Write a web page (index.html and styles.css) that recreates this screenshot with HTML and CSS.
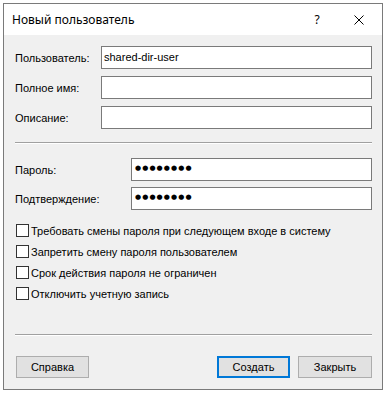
FILE: index.html
```html
<!DOCTYPE html>
<html lang="ru">
<head>
<meta charset="utf-8">
<title>Новый пользователь</title>
<link rel="stylesheet" href="styles.css">
</head>
<body>
<div class="window">
  <div class="titlebar">
    <span class="title">Новый пользователь</span>
    <span class="help">?</span>
    <span class="close">
      <svg width="10" height="10" viewBox="0 0 10 10"><path d="M0.5 0.5L9.5 9.5M9.5 0.5L0.5 9.5" stroke="#000" stroke-width="1" fill="none"/></svg>
    </span>
  </div>
  <div class="content">
    <div class="fields fields-user">
      <div class="row"><span class="label">Пользователь:</span><div class="input">shared-dir-user</div></div>
      <div class="row"><span class="label">Полное имя:</span><div class="input"></div></div>
      <div class="row"><span class="label">Описание:</span><div class="input"></div></div>
    </div>
    <div class="sep sep1"></div>
    <div class="fields fields-pass">
      <div class="row"><span class="label">Пароль:</span><div class="input pass">●●●●●●●●</div></div>
      <div class="row"><span class="label">Подтверждение:</span><div class="input pass">●●●●●●●●</div></div>
    </div>
    <div class="checks">
      <div class="check"><span class="box"></span><span>Требовать смены пароля при следующем входе в систему</span></div>
      <div class="check"><span class="box"></span><span>Запретить смену пароля пользователем</span></div>
      <div class="check"><span class="box"></span><span>Срок действия пароля не ограничен</span></div>
      <div class="check"><span class="box"></span><span>Отключить учетную запись</span></div>
    </div>
    <div class="sep sep2"></div>
    <div class="buttons">
      <button class="btn">Справка</button>
      <span class="spacer"></span>
      <button class="btn default">Создать</button>
      <button class="btn">Закрыть</button>
    </div>
  </div>
</div>
</body>
</html>
```
FILE: styles.css
```css
html, body {
  margin: 0;
  padding: 0;
  background: #ffffff;
}
body {
  font-family: "Liberation Sans", Arial, sans-serif;
  font-size: 11px;
  color: #000;
}
.window {
  margin: 3px 0 0 3px;
  width: 380px;
  height: 387px;
  box-sizing: border-box;
  border: 1px solid #7a7a7a;
  display: flex;
  flex-direction: column;
  background: #f0f0f0;
}
.titlebar {
  height: 31px;
  flex: none;
  background: #fff;
  display: flex;
  align-items: center;
  font-family: "Segoe UI", "Noto Sans", sans-serif;
  font-size: 12px;
}
.title {
  margin-left: 8px;
  flex: 1;
}
.help {
  width: 20px;
  text-align: center;
  margin-right: 27px;
}
.close {
  width: 10px;
  height: 10px;
  margin-right: 18px;
  display: flex;
}
.content {
  flex: 1;
  padding: 11px 10px 0 11px;
  display: flex;
  flex-direction: column;
}
.fields {
  display: flex;
  flex-direction: column;
}
.fields-user { gap: 7px; }
.fields-pass { gap: 6px; margin-top: 14px; }
.row {
  display: flex;
  align-items: center;
  height: 23px;
}
.fields-user .label { width: 86px; }
.fields-pass .label { width: 116px; }
.label {
  flex: none;
  padding-top: 1px;
}
.input {
  flex: 1;
  height: 23px;
  box-sizing: border-box;
  border: 1px solid #7a7a7a;
  background: #fff;
  padding: 4px 0 0 2px;
  line-height: 13px;
}
.pass {
  font-family: "DejaVu Sans", sans-serif;
  font-size: 7px;
  letter-spacing: 1.1px;
  padding: 3px 0 0 3px;
  line-height: 13px;
}
.sep {
  height: 0;
  border-top: 1px solid #a0a0a0;
  border-bottom: 1px solid #ffffff;
}
.sep1 { margin-top: 13px; }
.checks {
  margin-top: 12px;
  display: flex;
  flex-direction: column;
  gap: 4px;
}
.check {
  display: flex;
  align-items: center;
  height: 17px;
  padding-left: 1px;
}
.box {
  width: 13px;
  height: 13px;
  box-sizing: border-box;
  border: 1px solid #333;
  background: #fff;
  margin-right: 2px;
  flex: none;
}
.sep2 { margin-top: 32px; }
.buttons {
  margin-top: 20px;
  display: flex;
  align-items: center;
  padding-left: 1px;
}
.spacer { flex: 1; }
.btn {
  width: 73px;
  height: 22px;
  box-sizing: border-box;
  border: 1px solid #adadad;
  background: #e1e1e1;
  font-family: "Liberation Sans", Arial, sans-serif;
  font-size: 11px;
  color: #000;
  padding: 0;
  margin: 0;
}
.btn.default {
  border: 2px solid #0078d7;
  margin-right: 8px;
}
.buttons .btn:last-child { width: 74px; }
```
